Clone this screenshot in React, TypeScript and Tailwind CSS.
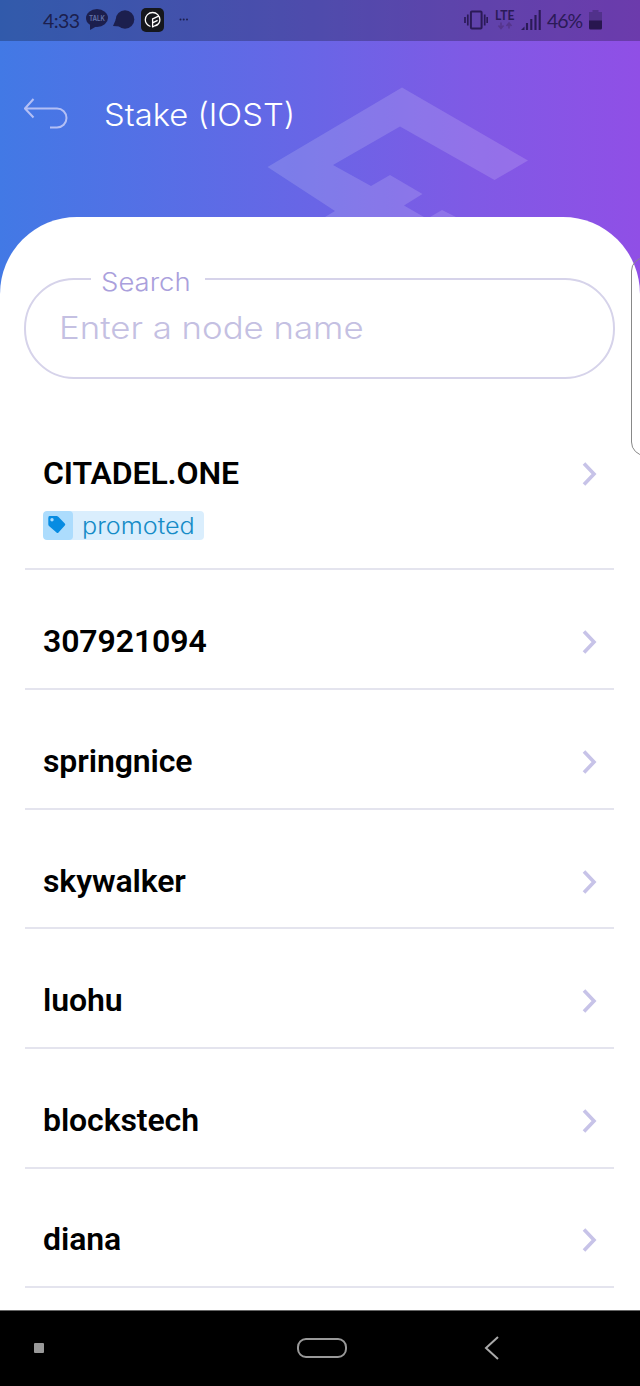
import React from "react";

const geometric = "font-['Inter','Open_Sans',sans-serif]";

const nodes = [
  { name: "CITADEL.ONE", promoted: true },
  { name: "307921094" },
  { name: "springnice" },
  { name: "skywalker" },
  { name: "luohu" },
  { name: "blockstech" },
  { name: "diana" },
];

function StatusBar() {
  return (
    <div className="flex h-[41px] items-center bg-black/25 pb-px pl-[43px] pr-[38px] text-[#1c1f4e]">
      <span className="mt-[2px] w-[43px] font-['Lato',sans-serif] text-[19.5px] leading-5 tracking-[-0.6px]">4:33</span>
      <svg className="h-[22px] w-[22px]" viewBox="0 0 22 22" fill="currentColor">
        <ellipse cx="11" cy="9" rx="11" ry="9" />
        <path d="M4 14v7l7-4z" />
        <text x="3" y="11.8" fontSize="7.5" fontFamily="Inter" fontWeight="600" fill="#6474aa" textLength="16" lengthAdjust="spacingAndGlyphs">TALK</text>
      </svg>
      <svg className="ml-[5px] h-[20px] w-[22px]" viewBox="0 0 22 20" fill="currentColor">
        <circle cx="12" cy="9.5" r="9.3" />
        <path d="M3.500 8L0 16l7 .5z" />
      </svg>
      <svg className="ml-[6px] h-6 w-[23px]" viewBox="0 0 23 24" fill="none">
        <rect width="23" height="24" rx="5" fill="#15171d" />
        <path d="M9.400 18.500C6 17 4.300 14.500 4.300 11.800a7.300 7.300 0 0 1 14.600 0c0 2.600-1.600 5-4.600 6.200M11.600 19.500V11l6-2.800M11.600 14.800l5-2.500M12 18.800l5-2.800" stroke="white" strokeWidth="1.300" />
      </svg>
      <svg className="ml-[15px] h-2 w-[10px]" viewBox="0 0 10 8" fill="currentColor">
        <circle cx="1.500" cy="3.500" r="1" /><circle cx="4.700" cy="3.500" r="1" /><circle cx="8" cy="3.500" r="1" />
      </svg>
      <div className="ml-auto flex items-center text-[#2b1a57]">
        <svg className="h-5 w-6" viewBox="0 0 24 20" fill="none" stroke="currentColor">
          <rect x="6.900" y="1.400" width="10.700" height="17.200" rx="1" strokeWidth="2" />
          <path d="M3.800 4.500v11M20.700 4.500v11M1 7v6M23.200 7v6" strokeWidth="1.700" />
        </svg>
        <svg className="ml-[6px] h-[22px] w-[22px] overflow-visible" viewBox="0 0 22 22" fill="currentColor">
          <text x="1" y="11.200" fontFamily="Lato" fontWeight="700" fontSize="13.500" textLength="19.500" lengthAdjust="spacingAndGlyphs">LTE</text>
          <path d="M7 13.500v5.500M4.500 16.500L7 19.500l2.500-3M15 19.500v-5.500M12.500 17l2.500-3 2.500 3" fill="none" stroke="#55358c" strokeWidth="1.600" />
        </svg>
        <svg className="ml-[5px] h-5 w-5" viewBox="0 0 20 20" fill="none" stroke="currentColor" strokeWidth="2.100">
          <path d="M6 20v-7M10.300 20V9M14.500 20V5M18.700 20V0" />
          <path d="M0 20l3.500-3.500V20z" stroke="none" fill="currentColor" />
        </svg>
        <span className="ml-[6px] mt-[2px] w-[36px] whitespace-nowrap font-['Lato',sans-serif] text-[19.500px] leading-5 tracking-[-1.100px]">46%</span>
        <svg className="ml-[6px] h-5 w-[13px]" viewBox="0 0 13 20">
          <path d="M3.500 0h6v2H13v9H0V2h3.500z" fill="#51318b" />
          <path d="M0 10.500h13V18q0 1.500-1.500 1.500h-10Q0 19.500 0 18z" fill="#28164f" />
        </svg>
      </div>
    </div>
  );
}

function Header() {
  return (
    <header className="relative flex h-[176px] pl-6 pt-[50px]">
      <svg className="absolute left-[267px] top-[46px] h-[130px] w-[262px]" viewBox="267 87 262 130" fill="#ffffff" fillOpacity=".15">
        <path d="M402 87.500L528 160.500L494.500 180L400 126.500L333 165L371 186L390 175L422.500 194L404 205.500L424 217H325L335 211L267.500 167Z" />
        <path d="M430 217l12-7 14 7z" />
      </svg>
      <svg className="mt-[6px] h-[34px] w-[44px]" viewBox="0 0 44 34" fill="none" stroke="#b3bff5" strokeWidth="2">
        <path d="M9.500 2L1 11.500l8.500 9M1.500 11.500H33a9 9 0 0 1 0 19H26" />
      </svg>
      <h1 className={`${geometric} ml-[36px] mt-px origin-left scale-x-[1.056] whitespace-nowrap text-[31px] font-light leading-[46px] text-white`}>Stake (IOST)</h1>
    </header>
  );
}

function Search() {
  return (
    <div className={`${geometric} relative ml-[24px] mr-[25px] h-[101px] rounded-[50px] border-2 border-[#d6d3ea] pl-[33px] pt-[25px] font-light`}>
      <div className="absolute left-[65px] top-[-15px] h-[34px] w-[114px] bg-white pl-[10px]">
        <label className="inline-block origin-left scale-x-[1.1] text-[25px] leading-[34px] text-[#aaa0dc]">Search</label>
      </div>
      <div className="w-max origin-left scale-x-[1.122] whitespace-nowrap text-[31px] leading-[46px] text-[#c4c0e2]">Enter a node name</div>
    </div>
  );
}

function PromotedTag() {
  return (
    <div className="mt-[18px] flex h-[29px] w-[161px] overflow-hidden rounded-[4px] bg-[#daeefd]">
      <div className="flex w-[30px] items-center justify-center rounded-[4px] bg-[#acdcfd]">
        <svg className="mb-px mr-[2px] h-[18px] w-[18px]" viewBox="0 0 18 18" fill="#078ce2" fillRule="evenodd">
          <path d="M1.500 0h7q1 0 1.800.8l6.500 6.700q1 1 0 2l-6.300 7q-1 1-2 0L1 10Q.3 9.200.3 8.200V2Q.3 0 1.500 0zM4 2a1.700 1.700 0 1 0 0 3.400A1.700 1.700 0 0 0 4 2z" />
        </svg>
      </div>
      <span className={`${geometric} ml-[9px] origin-left scale-x-[1.12] text-[22.500px] font-light leading-[29px] text-[#168cc7]`}>promoted</span>
    </div>
  );
}

export default function App() {
  return (
    <div className="flex h-[1386px] w-[640px] flex-col overflow-hidden bg-[linear-gradient(90deg,#4279e5_0%,#6965e6_49%,#7f5ae5_73%,#904fe6_100%)]">
      <StatusBar />
      <Header />
      <main className="relative flex h-[1093px] shrink-0 flex-col rounded-t-[77px] bg-white pt-[61px]">
        <Search />
        <ul className="ml-[25px] mr-[26px] mt-[74px] flex flex-col">
          {nodes.map((node) => (
            <li
              key={node.name}
              className={`flex justify-between border-b-2 border-[#e4e4ee] pl-[18px] pr-[17px] ${node.promoted ? "h-[117.300px]" : "h-[119.670px] pt-[50.900px]"}`}
            >
              <div>
                <div className="font-['Roboto',sans-serif] text-[32px] font-semibold leading-[40px] tracking-[-0.1px] text-black">{node.name}</div>
                {node.promoted && <PromotedTag />}
              </div>
              <svg className="mt-[9px] h-6 w-[15px]" viewBox="0 0 15 24" fill="none" stroke="#c7c3e8" strokeWidth="3.600">
                <path d="M2 1.500L12 12 2 22.500" />
              </svg>
            </li>
          ))}
        </ul>
        <div className="absolute right-[-19px] top-[40px] h-[199px] w-[28px] rounded-[24px] border border-[#888]" />
      </main>
      <nav className="flex h-[76px] shrink-0 items-center border-t border-[#666] bg-black pb-[2px] pl-[34px]">
        <div className="h-[10px] w-[10px] rounded-[1px] bg-[#999]" />
        <div className="ml-[253px] h-[20px] w-[50px] rounded-[9px] border-2 border-[#999]" />
        <svg className="ml-[137px] h-6 w-[15px]" viewBox="0 0 15 24" fill="none" stroke="#aaa" strokeWidth="2">
          <path d="M14 1L2 12l12 11" />
        </svg>
      </nav>
    </div>
  );
}
